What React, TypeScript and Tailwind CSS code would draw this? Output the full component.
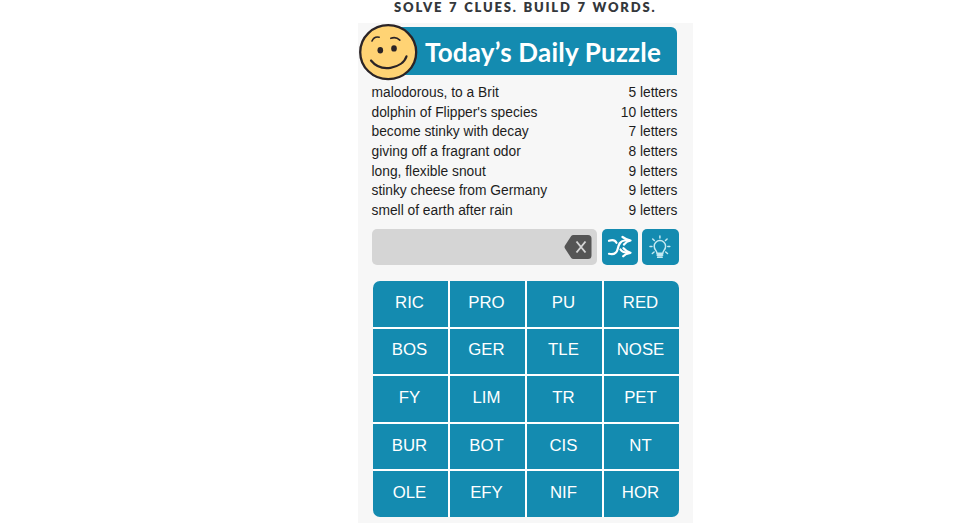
import { useState } from 'react'

const clues = [
  { clue: 'malodorous, to a Brit', letters: 5 },
  { clue: "dolphin of Flipper's species", letters: 10 },
  { clue: 'become stinky with decay', letters: 7 },
  { clue: 'giving off a fragrant odor', letters: 8 },
  { clue: 'long, flexible snout', letters: 9 },
  { clue: 'stinky cheese from Germany', letters: 9 },
  { clue: 'smell of earth after rain', letters: 9 },
]

const tiles = [
  'RIC', 'PRO', 'PU', 'RED',
  'BOS', 'GER', 'TLE', 'NOSE',
  'FY', 'LIM', 'TR', 'PET',
  'BUR', 'BOT', 'CIS', 'NT',
  'OLE', 'EFY', 'NIF', 'HOR',
]

function Smiley() {
  return (
    <svg viewBox="0 0 60 58" className="absolute left-0 top-0 h-[58px] w-[60px]" fill="none" stroke="#2b2426" strokeLinecap="round">
      <ellipse cx="30.2" cy="29.2" rx="28" ry="27" fill="#ffd374" strokeWidth="2.3" />
      <path d="M14 18c1.300-3 4-4.500 7.200-3.800M32.800 15.300c3-1.200 6.500-.7 9 1.800" strokeWidth="1.600" />
      <ellipse cx="22.3" cy="27.300" rx="2.800" ry="3.200" fill="#2b2426" stroke="none" />
      <ellipse cx="36" cy="25.400" rx="2.800" ry="3.200" fill="#2b2426" stroke="none" />
      <path d="M13 37.500c5 6.300 12 8.400 19.500 7.300 7.500-1.100 14-5.300 16-11.500" strokeWidth="2.200" />
    </svg>
  )
}

function BackspaceIcon() {
  return (
    <svg viewBox="0 0 28 26" className="h-[26px] w-7" fill="none">
      <path d="M9.500 1H24a3.500 3.500 0 0 1 3.500 3.500v17A3.500 3.500 0 0 1 24 25H9.500q-1.500 0-2.300-1L1 14.500q-1-1.500 0-3L7.200 2q.8-1 2.300-1z" fill="#555" />
      <path d="M12.500 7.500l9 11M21.500 7.500l-9 11" stroke="#d5d5d5" strokeWidth="1.900" />
    </svg>
  )
}

function ShuffleIcon() {
  return (
    <svg viewBox="0 0 36 36" className="size-9" fill="none" stroke="#fff" strokeWidth="2.200" strokeLinecap="round" strokeLinejoin="round">
      <path d="M7 24.800c4.500 1 7.500-.3 8.500-4.300 1.200-5 2.500-8.800 7-9h5" />
      <path d="M7 11.800c3-1.200 6-.8 7.500 2M18.500 20.500c1.500 2.500 4.500 3.300 8.500 3.300" />
      <path d="M20.500 8c2.500 1.800 5 3 8 3.500-3 .7-5 2-6.500 4M21.500 19.200c2 2.300 4.500 4 7 4.600-3 .4-5.500 1.500-7.300 3.500" />
    </svg>
  )
}

function BulbIcon() {
  return (
    <svg viewBox="0 0 36 36" className="size-9" fill="none" stroke="#c5e9f1" strokeWidth="1.500" strokeLinecap="round">
      <path d="M15 24.200c-.2-2.500-2.800-3.500-2.800-7a5.700 5.700 0 0 1 11.400 0c0 3.500-2.600 4.500-2.800 7z" />
      <path d="M15.300 26h5.200M15.800 28.200h4.200" strokeWidth="1.800" />
      <path d="M17.900 7v2M10.700 10l1.600 1.500M25.100 10l-1.600 1.500M8 17.500h2M25.800 17.500h2M10.300 24.500l1.800-1.500M25.500 24.500L23.700 23" />
    </svg>
  )
}

export default function App() {
  const [word, setWord] = useState('')

  return (
    <div className="h-[523px] overflow-hidden bg-white font-['Liberation_Sans',Arial,sans-serif] text-[#1d1d1d]">
      <h2 className="ml-[394px] h-[23px] whitespace-nowrap font-['Lato',sans-serif] text-[13px] leading-[15px] font-extrabold tracking-[1.8px] [word-spacing:1px] text-[#34383c]">
        SOLVE 7 CLUES. BUILD 7 WORDS.
      </h2>

      <main className="ml-[358px] h-[500px] w-[335px] bg-[#f7f7f7]">
        {/* Title banner */}
        <header className="relative pt-1">
          <div className="ml-[30px] flex h-12 w-[289px] items-center rounded-tr-[6px] bg-[#148bb0] pl-[37px]">
            <h1 className="whitespace-nowrap pt-px font-['Lato',sans-serif] text-[26px] leading-none font-bold tracking-[0.22px] text-white">
              Today’s Daily Puzzle
            </h1>
          </div>
          <Smiley />
        </header>

        {/* Clues */}
        <ul className="mt-[7.9px] ml-[13.5px] w-[306px] text-[13.8px] leading-[19.7px]">
          {clues.map((item) => (
            <li key={item.clue} className="flex justify-between">
              <span>{item.clue}</span>
              <span>{item.letters} letters</span>
            </li>
          ))}
        </ul>

        {/* Current word */}
        <div className="mt-[8.2px] ml-3.5 flex h-9">
          <div className="flex w-[225px] items-center justify-between rounded-[5px] bg-[#d5d5d5] pr-[5px]">
            <span className="pl-3 text-[17px]">{word}</span>
            <button onClick={() => setWord('')} aria-label="Clear">
              <BackspaceIcon />
            </button>
          </div>
          <button aria-label="Shuffle" className="ml-[5px] size-9 rounded-[5px] bg-[#148bb0]">
            <ShuffleIcon />
          </button>
          <button aria-label="Hint" className="ml-1 h-9 w-[37px] rounded-[5px] bg-[#148bb0]">
            <BulbIcon />
          </button>
        </div>

        {/* Letter tiles */}
        <div className="mt-4 ml-[15px] grid h-[236px] w-[306px] grid-cols-4 grid-rows-5 gap-[2px] overflow-hidden rounded-[7px] bg-white">
          {tiles.map((tile) => (
            <button
              key={tile}
              onClick={() => setWord(word + tile)}
              className="bg-[#148bb0] pr-[2px] pb-[1.4px] text-[16.8px] leading-none text-white"
            >
              {tile}
            </button>
          ))}
        </div>
      </main>
    </div>
  )
}
